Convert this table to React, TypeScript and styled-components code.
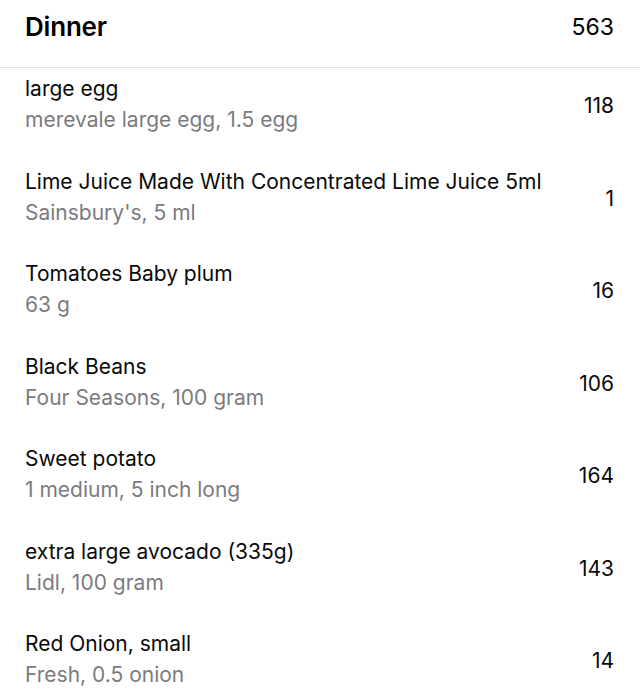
import styled, { createGlobalStyle } from "styled-components";

const GlobalStyle = createGlobalStyle`
  html, body {
    margin: 0;
    padding: 0;
    background: #fff;
  }
  body {
    font-family: Inter, "Liberation Sans", sans-serif;
    -webkit-font-smoothing: antialiased;
  }
`;

const Wrapper = styled.section`
  width: 640px;
  background: #fff;
`;

const Header = styled.header`
  height: 68px;
  padding: 0 26px 0 25px;
  display: flex;
  justify-content: space-between;
  align-items: flex-start;
  border-bottom: 1px solid #e2e2e4;
  box-sizing: border-box;
  .title {
    font-size: 26px;
    font-weight: 600;
    color: #000;
    line-height: 54px;
    letter-spacing: -0.2px;
  }
  .total {
    font-size: 23px;
    font-weight: 400;
    color: #000;
    line-height: 54px;
  }
`;

const Row = styled.div`
  height: 92.5px;
  padding: 5px 26px 0 25px;
  box-sizing: border-box;
  display: flex;
  justify-content: space-between;
  align-items: flex-start;
`;

const Info = styled.div`
  display: flex;
  flex-direction: column;
  .name {
    font-size: 21px;
    line-height: 31px;
    color: #0a0a0a;
  }
  .detail {
    font-size: 21px;
    line-height: 31px;
    color: #7b7b7f;
  }
`;

const Calories = styled.div`
  font-size: 21px;
  color: #0a0a0a;
  margin-top: 17px;
  line-height: 31px;
`;

const items = [
  { name: "large egg", detail: "merevale large egg, 1.5 egg", kcal: 118 },
  { name: "Lime Juice Made With Concentrated Lime Juice 5ml", detail: "Sainsbury's, 5 ml", kcal: 1 },
  { name: "Tomatoes Baby plum", detail: "63 g", kcal: 16 },
  { name: "Black Beans", detail: "Four Seasons, 100 gram", kcal: 106 },
  { name: "Sweet potato", detail: "1 medium, 5 inch long", kcal: 164 },
  { name: "extra large avocado (335g)", detail: "Lidl, 100 gram", kcal: 143 },
  { name: "Red Onion, small", detail: "Fresh, 0.5 onion", kcal: 14 },
];

const App = () => {
  return (
    <Wrapper>
      <GlobalStyle />
      <Header>
        <span className="title">Dinner</span>
        <span className="total">563</span>
      </Header>
      {items.map((item) => (
        <Row key={item.name}>
          <Info>
            <span className="name">{item.name}</span>
            <span className="detail">{item.detail}</span>
          </Info>
          <Calories>{item.kcal}</Calories>
        </Row>
      ))}
    </Wrapper>
  );
};

export default App;
